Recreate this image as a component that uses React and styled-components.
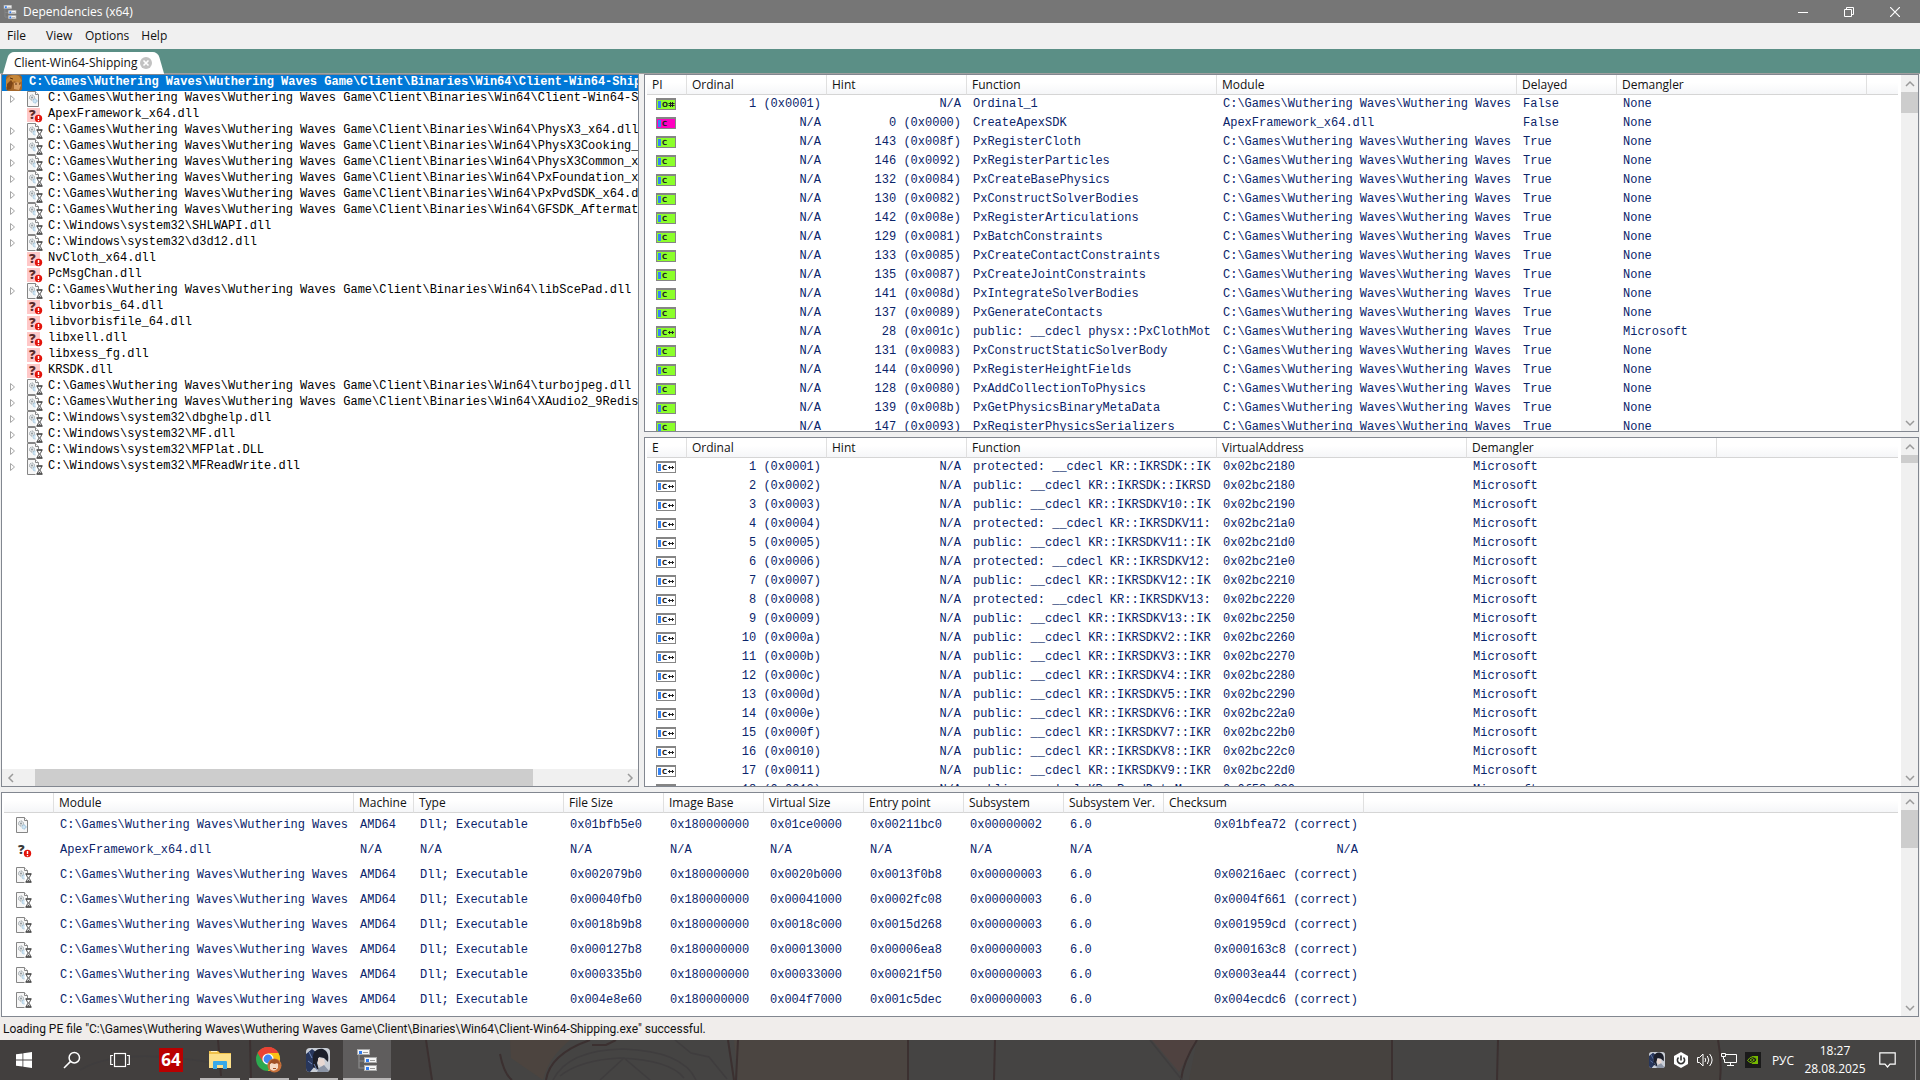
import React from "react";
import styled, { createGlobalStyle, css } from "styled-components";

const GlobalStyle = createGlobalStyle`
  * {
    box-sizing: border-box;
  }
  body {
    margin: 0;
    overflow: hidden;
    font-family: "Open Sans", "Noto Sans", sans-serif;
    font-size: 12px;
    color: #111;
  }
  button {
    border: none;
    padding: 0;
    background: none;
    font: inherit;
    color: inherit;
  }
  svg {
    display: block;
  }
`;

const Page = styled.div`
  display: flex;
  flex-direction: column;
  height: 100vh;
  background-color: #f0f0f0;
`;

/* ---------- title bar, menu, tabs ---------- */

const TitleBar = styled.header`
  display: flex;
  align-items: center;
  height: 23px;
  padding: 0 2px 0 3px;
  background-color: #767676;
  color: #fff;
`;

const Title = styled.h1`
  flex: 1;
  margin: 0;
  padding: 0 0 0 6px;
  font-size: 12px;
  font-weight: 400;
  line-height: 22px;
`;

const WindowButton = styled.button`
  display: flex;
  justify-content: center;
  align-items: center;
  width: 46px;
  height: 21px;
`;

const MenuBar = styled.nav`
  display: flex;
  height: 26px;
  padding-left: 1px;
`;

const MenuItem = styled.button`
  min-width: 39px;
  padding: 0 6px;
  text-align: left;
  line-height: 26px;
`;

const TabStrip = styled.div`
  display: flex;
  align-items: flex-end;
  height: 25px;
  padding-left: 6px;
  background-color: #5b8f86;
  border-bottom: 1px solid #a0a0a0;
`;

const Tab = styled.div`
  position: relative;
  display: flex;
  align-items: center;
  gap: 3px;
  height: 21px;
  padding: 0 8px;
  z-index: 0;
  &::before,
  &::after {
    content: "";
    position: absolute;
    top: 0;
    bottom: -1px;
    width: 60%;
    background-color: #fff;
    z-index: -1;
  }
  &::before {
    left: 0;
    border-radius: 5px 0 0 0;
    transform: skewX(-16deg);
  }
  &::after {
    right: 0;
    border-radius: 0 5px 0 0;
    transform: skewX(16deg);
  }
`;

const TabLabel = styled.button`
  line-height: 22px;
`;

/* ---------- panels ---------- */

const Main = styled.main`
  flex: 1;
  min-height: 0;
  display: grid;
  grid-template-columns: minmax(0, 638fr) minmax(0, 1275fr);
  grid-template-rows: minmax(0, 713fr) minmax(0, 225fr);
  gap: 5px;
  padding: 0 1px;
`;

const RightSide = styled.div`
  display: grid;
  grid-template-rows: minmax(0, 358fr) minmax(0, 350fr);
  gap: 5px;
  min-height: 0;
`;

const Panel = styled.section`
  display: flex;
  flex-direction: ${(props) => props.$direction || "row"};
  grid-column: ${(props) => (props.$wide ? "1 / -1" : "auto")};
  min-width: 0;
  min-height: 0;
  background-color: #fff;
  border: 1px solid #828790;
`;

const TableArea = styled.div`
  flex: 1;
  min-width: 0;
  overflow: hidden;
  padding: 0 3px 0 2px;
`;

const Table = styled.table`
  width: 100%;
  table-layout: fixed;
  border-collapse: separate;
  border-spacing: 0;
`;

const HeadCell = styled.th`
  height: 20px;
  padding: 0 5px;
  border-bottom: 1px solid #d5d5d5;
  border-right: ${(props) => (props.$last ? "none" : "1px solid #e0e0e0")};
  background: linear-gradient(#fff 40%, #f5f6f8);
  font-weight: 400;
  text-align: left;
  line-height: 19px;
  white-space: nowrap;
`;

const Cell = styled.td`
  height: ${(props) => props.$height}px;
  padding: 0 ${(props) => (props.$icon ? 0 : 6)}px 2px ${(props) => props.$icon || 6}px;
  color: #0a246a;
  font-family: "Liberation Mono", monospace;
  line-height: 16px;
  text-align: ${(props) => (props.$right ? "right" : "left")};
  white-space: pre;
  overflow: hidden;
`;

const ScrollBar = styled.div`
  display: flex;
  background-color: #f0f0f0;
  ${(props) =>
    props.$horizontal
      ? css`
          height: 17px;
        `
      : css`
          flex-direction: column;
          width: 17px;
        `}
`;

const ScrollButton = styled.button`
  display: flex;
  flex: 0 0 17px;
  justify-content: center;
  align-items: center;
`;

const ScrollTrack = styled.div`
  flex: 1;
  ${(props) =>
    props.$horizontal
      ? css`
          padding-left: 16px;
        `
      : css`
          min-height: 0;
        `}
`;

const ScrollThumb = styled.div`
  background-color: #cdcdcd;
  width: ${(props) => (props.$horizontal ? props.$size : "100%")};
  height: ${(props) => (props.$horizontal ? "100%" : props.$size)};
`;

/* ---------- tree ---------- */

const TreeList = styled.ul`
  flex: 1;
  min-height: 0;
  margin: 0;
  padding: 0;
  overflow: hidden;
  list-style: none;
  font-family: "Liberation Mono", monospace;
  color: #000;
`;

const TreeItem = styled.li`
  display: flex;
  align-items: center;
  gap: ${(props) => (props.$root ? 7 : 5)}px;
  height: 16px;
  padding-left: ${(props) => (props.$root ? 4 : 7)}px;
  white-space: pre;
  line-height: 14px;
  ${(props) =>
    props.$root &&
    css`
      background-color: #0078d7;
      color: #fff;
      font-weight: 700;
    `}
`;

const TreeText = styled.span`
  height: 16px;
`;

const Expander = styled.span`
  width: 13px;
  flex: none;
`;

const IconBox = styled.span`
  flex: none;
`;

/* ---------- status bar, task bar ---------- */

const StatusBar = styled.footer`
  height: 23px;
  padding-left: 3px;
  background-color: #f0edeb;
  font-family: Roboto, "Open Sans", sans-serif;
  line-height: 25px;
`;

const TaskBar = styled.div`
  position: relative;
  display: flex;
  justify-content: space-between;
  height: 40px;
  background-color: #454443;
  color: #fff;
  z-index: 0;
`;

const Wallpaper = styled.svg`
  position: absolute;
  inset: 0;
  width: 100%;
  height: 100%;
  z-index: -1;
`;

const TaskGroup = styled.div`
  display: flex;
  gap: ${(props) => props.$gap || 0}px;
`;

const TaskButton = styled.button`
  display: flex;
  justify-content: center;
  align-items: center;
  width: 48px;
  height: 40px;
  background-color: ${(props) => (props.$active ? "#5f5d5d" : "transparent")};
  background-image: ${(props) => (props.$running ? "linear-gradient(#b9b7b7, #b9b7b7)" : "none")};
  background-size: ${(props) => (props.$active ? 48 : 40)}px 2px;
  background-position: bottom center;
  background-repeat: no-repeat;
`;

const Tray = styled.div`
  display: flex;
  align-items: center;
`;

const TrayButton = styled.button`
  display: flex;
  justify-content: center;
  align-items: center;
  width: ${(props) => props.$width || 24}px;
  height: 40px;
`;

const Clock = styled.button`
  width: 68px;
  line-height: 18px;
  text-align: center;
`;

const ShowDesktop = styled.button`
  width: 5px;
  height: 40px;
  margin-left: 10px;
  border-left: 1px solid #8a8888;
`;

/* ---------- icons ---------- */

const AppIcon = ({ size = 16 }) => (
  <svg width={size} height={size} viewBox="0 0 22 22">
    <path d="M3 6v13h5M3 12h5" fill="none" stroke="#8b8b8b" strokeWidth="1.2" />
    {[
      [1, 0],
      [8, 8],
      [8, 16],
    ].map(([x, y]) => (
      <g key={y}>
        <rect x={x} y={y} width="13" height="6" fill="#a9a9a9" />
        <rect x={x + 1} y={y + 1} width="11" height="4" fill="#f6f6f6" />
        <rect x={x + 2} y={y + 2} width="3" height="3" fill="#2f7bf0" />
        <rect x={x + 6} y={y + 3} width="5" height="1" fill="#9a9a9a" />
      </g>
    ))}
  </svg>
);

const PageIcon = ({ delayed }) => (
  <svg width="16" height="16" viewBox="0 0 16 16">
    <path d="M.5.5h8l3 3v12H.5z" fill="#f7f7f7" stroke="#858585" />
    <path d="M8.500 .5v3h3" fill="#fff" stroke="#858585" />
    <circle cx="5" cy="6.500" r="2.500" fill="#e4e8ea" stroke="#8f979c" strokeDasharray="1.200 .7" />
    <circle cx="5" cy="6.500" r="1" fill="#8f979c" />
    <circle cx="8" cy="10" r="2" fill="#cfe6f5" stroke="#8fb9d6" strokeDasharray="1.100 .6" />
    {delayed && (
      <g>
        <rect x="8.500" y="6" width="7.500" height="10" fill="#fff" />
        <path d="M9.500 7h6M9.500 15h6" stroke="#333" strokeWidth="1.400" />
        <path d="M10.500 7.500c0 2 1.500 2.500 1.500 3.500s-1.500 1.500-1.500 3.500M14.500 7.500c0 2-1.500 2.500-1.500 3.500s1.500 1.500 1.500 3.500" fill="none" stroke="#333" />
        <path d="M11 14.500l1.500-2 1.500 2z" fill="#555" />
      </g>
    )}
  </svg>
);

const MissingIcon = ({ pink }) => (
  <svg width="16" height="16" viewBox="0 0 16 16">
    {pink && <rect x="0" y="1" width="13" height="14" fill="#ffc8c8" />}
    <text x="2" y="12" fontFamily="Open Sans, sans-serif" fontWeight="800" fontSize="13" fill={pink ? "#5a2b2b" : "#3a3a3a"}>
      ?
    </text>
    <circle cx="11.500" cy="11.500" r="3.700" fill="#e2130b" />
    <path d="M11.500 9v3M11.500 13v1.200" stroke="#fff" strokeWidth="1.400" />
  </svg>
);

const MonsterIcon = () => (
  <svg width="16" height="16" viewBox="0 0 16 16">
    <rect width="16" height="16" rx="3" fill="#a5672a" />
    <path d="M0 5c3-5 9-6 13-4l3 5-3 2-5-2-4 4-4 2z" fill="#c58638" />
    <path d="M1 9l4-4 2 3-2 6-4 1z" fill="#7c4517" />
    <path d="M8 8l4-1 3 3-2 5-5-1z" fill="#d9a066" />
    <path d="M9 9h2M13 9h1M4 3l3 1" stroke="#5a2f0e" />
  </svg>
);

const SymbolIcon = ({ fill = "#8bff2a", label = "C" }) => (
  <svg width="20" height="12" viewBox="0 0 20 12">
    <rect x=".5" y=".5" width="19" height="11" fill={fill} stroke="#858585" />
    <rect width="20" height="2" fill="#858585" />
    <rect x="2" y="3" width="3" height="7" fill="#3584f5" />
    <text x="6" y="9" fontFamily="DejaVu Sans, sans-serif" fontWeight="700" fontSize="7" fill="#222">
      {label[0]}
    </text>
    {label === "C++" && <path d="M12 6.500h6M13.500 5v3M16.500 5v3" stroke="#222" />}
    {label === "O#" && <path d="M12.500 5.500h6M12.500 7.500h6M14.500 4v5M16.500 4v5" stroke="#222" />}
  </svg>
);

const Chevron = ({ dir }) => {
  const paths = {
    up: "M1 7l4-4 4 4",
    down: "M1 3l4 4 4-4",
    left: "M7 1L3 5l4 4",
    right: "M3 1l4 4-4 4",
  };
  return (
    <svg width="10" height="10" viewBox="0 0 10 10">
      <path d={paths[dir]} fill="none" stroke="#9a9a9a" strokeWidth="1.500" />
    </svg>
  );
};

const ExpandIcon = () => (
  <svg width="10" height="10" viewBox="0 0 10 10">
    <path d="M1.500 1.500v7l4-3.500z" fill="#fff" stroke="#a6a6a6" />
  </svg>
);

const GameIcon = ({ size = 24 }) => (
  <svg width={size} height={size} viewBox="0 0 24 24">
    <clipPath id={"game" + size}>
      <rect width="24" height="24" rx="4" />
    </clipPath>
    <g clipPath={`url(#game${size})`}>
      <rect width="24" height="24" fill="#c9ced6" />
      <path d="M0 6L6 1l4 3-3 8 2 6-5 6H0z" fill="#27365c" />
      <path d="M7 9C7 3 12 0 17 1c5 2 6 7 5 13l-4-4-5-1-2 6 2 7-6-3z" fill="#1b1e2a" />
      <path d="M12 10l6 1 1 5-3 3-4-3z" fill="#e8d8d2" />
      <path d="M13 20l5-3 6 7H11z" fill="#8b94a5" />
      <path d="M3 4l3 6M2 13l4 3M8 16l3 6" stroke="#6f86b8" />
    </g>
  </svg>
);

const StartIcon = () => (
  <svg width="16" height="16" viewBox="0 0 16 16" fill="#fff">
    <path d="M0 2.300L6.500 1.400V7.600H0zM7.300 1.300L16 0v7.600H7.300zM0 8.400h6.500v6.200L0 13.700zM7.300 8.400H16V16l-8.700-1.300z" />
  </svg>
);

const SearchIcon = () => (
  <svg width="18" height="18" viewBox="0 0 18 18" fill="none" stroke="#fff" strokeWidth="1.500">
    <circle cx="11.300" cy="6.700" r="5.200" />
    <path d="M7.600 10.400L1 17" />
  </svg>
);

const TaskViewIcon = () => (
  <svg width="20" height="16" viewBox="0 0 20 16" fill="none" stroke="#fff" strokeWidth="1.200">
    <rect x="4.500" y="1.500" width="11" height="13" />
    <path d="M3 3.500H.7v9H3M17 3.500h2.300v9H17" />
  </svg>
);

const SixtyFourIcon = () => (
  <svg width="24" height="24" viewBox="0 0 24 24">
    <rect width="24" height="24" fill="#b90000" />
    <text x="12" y="18" textAnchor="middle" fontFamily="Open Sans, sans-serif" fontWeight="700" fontSize="17" fill="#fff">
      64
    </text>
  </svg>
);

const ExplorerIcon = () => (
  <svg width="22" height="20" viewBox="0 0 22 20">
    <path d="M0 1h9l2 2h11v15H0z" fill="#f0c14b" />
    <path d="M0 4h22v14H0z" fill="#fde08a" />
    <path d="M2 1.500h6" stroke="#fff2c4" />
    <path d="M4 19v-7q0-1 1-1h12q1 0 1 1v7h-4v-4H8v4z" fill="#38a9e8" />
  </svg>
);

const ChromeIcon = () => (
  <svg width="26" height="26" viewBox="0 0 26 26">
    <circle cx="12" cy="12" r="12" fill="#2da94f" />
    <path d="M1.600 6A12 12 0 0 1 22.400 6L12 8z" fill="#ea4335" />
    <path d="M1.600 6L7 15l5-9h10.400A12 12 0 0 0 1.600 6z" fill="#ea4335" />
    <path d="M22.400 6H12l5 9-5 9A12 12 0 0 0 22.400 6z" fill="#fbc116" />
    <circle cx="12" cy="12" r="5.600" fill="#fff" />
    <circle cx="12" cy="12" r="4.400" fill="#4285f4" />
    <circle cx="18.500" cy="18.500" r="7" fill="#c8713a" />
    <path d="M14 17q4-5 8 0v4q-4 5-8 1z" fill="#f6d9c4" />
    <path d="M12.500 18q2-6 6-6t6 6l-3-2-3 1-3-1z" fill="#a04f24" />
    <path d="M17 21.500h3" stroke="#a04f24" />
  </svg>
);

const PowerIcon = () => (
  <svg width="16" height="16" viewBox="0 0 16 16">
    <path d="M8 0l7 4v8l-7 4-7-4V4z" fill="#fff" />
    <path d="M5.500 5.500a3.600 3.600 0 1 0 5 0M8 3.500v5" fill="none" stroke="#333" strokeWidth="1.600" />
  </svg>
);

const VolumeIcon = () => (
  <svg width="17" height="14" viewBox="0 0 17 14" fill="none" stroke="#fff">
    <path d="M.5 4.500h2l3.500-3.500v12l-3.500-3.500h-2z" />
    <path d="M8 5q1.500 2 0 4M10.300 3q3 4 0 8M12.600 1q5 6 0 12" />
  </svg>
);

const NetworkIcon = () => (
  <svg width="16" height="14" viewBox="0 0 16 14" fill="none" stroke="#fff">
    <path d="M5 1.500h10.500v8H3.500V6M9.500 9.500v3M6 12.500h7" />
    <path d="M.5.500h4v3h-4zM2.500 3.500v3" />
  </svg>
);

const NvidiaIcon = () => (
  <svg width="16" height="16" viewBox="0 0 16 16">
    <rect width="16" height="16" fill="#1a1a1a" />
    <path d="M7 4h6v8H7z" fill="#76b900" />
    <path d="M2.500 8.500Q5 4.500 8 4.700T12 8q-2 3-4.500 3T2.500 8.500z" fill="#1a1a1a" stroke="#76b900" />
    <path d="M5 8q2.500-3 4.500 0-2.500 3-4.500 0z" fill="none" stroke="#76b900" />
  </svg>
);

const NotifyIcon = () => (
  <svg width="17" height="16" viewBox="0 0 17 16" fill="none" stroke="#fff" strokeWidth="1.200">
    <path d="M.8.800h15.400v11.400H11L8.500 15 6 12.200H.8z" />
  </svg>
);

/* ---------- data ---------- */

const WW = "C:\\Games\\Wuthering Waves\\Wuthering Waves";
const BIN = WW + " Game\\Client\\Binaries\\Win64\\";
const SYS = "C:\\Windows\\system32\\";

const treeRows = [
  ["page", BIN + "Client-Win64-Shipping.exe"],
  ["missing", "ApexFramework_x64.dll"],
  ["delayed", BIN + "PhysX3_x64.dll"],
  ["delayed", BIN + "PhysX3Cooking_x64.dll"],
  ["delayed", BIN + "PhysX3Common_x64.dll"],
  ["delayed", BIN + "PxFoundation_x64.dll"],
  ["delayed", BIN + "PxPvdSDK_x64.dll"],
  ["delayed", BIN + "GFSDK_Aftermath_Lib.x64.dll"],
  ["delayed", SYS + "SHLWAPI.dll"],
  ["delayed", SYS + "d3d12.dll"],
  ["missing", "NvCloth_x64.dll"],
  ["missing", "PcMsgChan.dll"],
  ["delayed", BIN + "libScePad.dll"],
  ["missing", "libvorbis_64.dll"],
  ["missing", "libvorbisfile_64.dll"],
  ["missing", "libxell.dll"],
  ["missing", "libxess_fg.dll"],
  ["missing", "KRSDK.dll"],
  ["delayed", BIN + "turbojpeg.dll"],
  ["delayed", BIN + "XAudio2_9Redist.dll"],
  ["delayed", SYS + "dbghelp.dll"],
  ["delayed", SYS + "MF.dll"],
  ["delayed", SYS + "MFPlat.DLL"],
  ["delayed", SYS + "MFReadWrite.dll"],
];

const importColumns = [
  { label: "PI", width: 40, icon: 9 },
  { label: "Ordinal", width: 140, right: true },
  { label: "Hint", width: 140, right: true },
  { label: "Function", width: 250 },
  { label: "Module", width: 300 },
  { label: "Delayed", width: 100 },
  { label: "Demangler", width: 250 },
];

const delayedImports = [
  ["143 (0x008f)", "PxRegisterCloth"],
  ["146 (0x0092)", "PxRegisterParticles"],
  ["132 (0x0084)", "PxCreateBasePhysics"],
  ["130 (0x0082)", "PxConstructSolverBodies"],
  ["142 (0x008e)", "PxRegisterArticulations"],
  ["129 (0x0081)", "PxBatchConstraints"],
  ["133 (0x0085)", "PxCreateContactConstraints"],
  ["135 (0x0087)", "PxCreateJointConstraints"],
  ["141 (0x008d)", "PxIntegrateSolverBodies"],
  ["137 (0x0089)", "PxGenerateContacts"],
  ["28 (0x001c)", "public: __cdecl physx::PxClothMot", "Microsoft"],
  ["131 (0x0083)", "PxConstructStaticSolverBody"],
  ["144 (0x0090)", "PxRegisterHeightFields"],
  ["128 (0x0080)", "PxAddCollectionToPhysics"],
  ["139 (0x008b)", "PxGetPhysicsBinaryMetaData"],
  ["147 (0x0093)", "PxRegisterPhysicsSerializers"],
];

const importRows = [
  [<SymbolIcon label="O#" />, "1 (0x0001)", "N/A", "Ordinal_1", WW, "False", "None"],
  [<SymbolIcon fill="#ff00c0" />, "N/A", "0 (0x0000)", "CreateApexSDK", "ApexFramework_x64.dll", "False", "None"],
  ...delayedImports.map(([hint, name, demangler]) => [
    <SymbolIcon label={demangler ? "C++" : "C"} />,
    "N/A",
    hint,
    name,
    WW,
    "True",
    demangler || "None",
  ]),
];

const exportColumns = [
  { label: "E", width: 40, icon: 9 },
  { label: "Ordinal", width: 140, right: true },
  { label: "Hint", width: 140, right: true },
  { label: "Function", width: 250 },
  { label: "VirtualAddress", width: 250 },
  { label: "Demangler", width: 250 },
];

const exportRows = [
  ["protected: __cdecl KR::IKRSDK::IK", "0x02bc2180"],
  ["public: __cdecl KR::IKRSDK::IKRSD", "0x02bc2180"],
  ["public: __cdecl KR::IKRSDKV10::IK", "0x02bc2190"],
  ["protected: __cdecl KR::IKRSDKV11:", "0x02bc21a0"],
  ["public: __cdecl KR::IKRSDKV11::IK", "0x02bc21d0"],
  ["protected: __cdecl KR::IKRSDKV12:", "0x02bc21e0"],
  ["public: __cdecl KR::IKRSDKV12::IK", "0x02bc2210"],
  ["protected: __cdecl KR::IKRSDKV13:", "0x02bc2220"],
  ["public: __cdecl KR::IKRSDKV13::IK", "0x02bc2250"],
  ["public: __cdecl KR::IKRSDKV2::IKR", "0x02bc2260"],
  ["public: __cdecl KR::IKRSDKV3::IKR", "0x02bc2270"],
  ["public: __cdecl KR::IKRSDKV4::IKR", "0x02bc2280"],
  ["public: __cdecl KR::IKRSDKV5::IKR", "0x02bc2290"],
  ["public: __cdecl KR::IKRSDKV6::IKR", "0x02bc22a0"],
  ["public: __cdecl KR::IKRSDKV7::IKR", "0x02bc22b0"],
  ["public: __cdecl KR::IKRSDKV8::IKR", "0x02bc22c0"],
  ["public: __cdecl KR::IKRSDKV9::IKR", "0x02bc22d0"],
  ["public: __cdecl KR::ReadDataMan::", "0x0f58a220"],
].map(([name, address], i) => [
  <SymbolIcon fill="#fff" label="C++" />,
  `${i + 1} (0x${(i + 1).toString(16).padStart(4, "0")})`,
  "N/A",
  name,
  address,
  "Microsoft",
]);

const moduleColumns = [
  { label: "", width: 50, icon: 12 },
  { label: "Module", width: 300 },
  { label: "Machine", width: 60 },
  { label: "Type", width: 150 },
  { label: "File Size", width: 100 },
  { label: "Image Base", width: 100 },
  { label: "Virtual Size", width: 100 },
  { label: "Entry point", width: 100 },
  { label: "Subsystem", width: 100 },
  { label: "Subsystem Ver.", width: 100 },
  { label: "Checksum", width: 200, right: true },
];

const moduleRow = (icon, size, virtualSize, entry, subsystem, checksum) => [
  icon,
  WW,
  "AMD64",
  "Dll; Executable",
  size,
  "0x180000000",
  virtualSize,
  entry,
  subsystem,
  "6.0",
  checksum + " (correct)",
];

const moduleRows = [
  moduleRow(<PageIcon />, "0x01bfb5e0", "0x01ce0000", "0x00211bc0", "0x00000002", "0x01bfea72"),
  [<MissingIcon />, "ApexFramework_x64.dll", ...Array(9).fill("N/A")],
  moduleRow(<PageIcon delayed />, "0x002079b0", "0x0020b000", "0x0013f0b8", "0x00000003", "0x00216aec"),
  moduleRow(<PageIcon delayed />, "0x00040fb0", "0x00041000", "0x0002fc08", "0x00000003", "0x0004f661"),
  moduleRow(<PageIcon delayed />, "0x0018b9b8", "0x0018c000", "0x0015d268", "0x00000003", "0x001959cd"),
  moduleRow(<PageIcon delayed />, "0x000127b8", "0x00013000", "0x00006ea8", "0x00000003", "0x000163c8"),
  moduleRow(<PageIcon delayed />, "0x000335b0", "0x00033000", "0x00021f50", "0x00000003", "0x0003ea44"),
  moduleRow(<PageIcon delayed />, "0x004e8e60", "0x004f7000", "0x001c5dec", "0x00000003", "0x004ecdc6"),
];

/* ---------- components ---------- */

const Scroller = ({ horizontal, size }) => (
  <ScrollBar $horizontal={horizontal}>
    <ScrollButton aria-label={horizontal ? "Scroll left" : "Scroll up"}>
      <Chevron dir={horizontal ? "left" : "up"} />
    </ScrollButton>
    <ScrollTrack $horizontal={horizontal}>
      <ScrollThumb $horizontal={horizontal} $size={size} />
    </ScrollTrack>
    <ScrollButton aria-label={horizontal ? "Scroll right" : "Scroll down"}>
      <Chevron dir={horizontal ? "right" : "down"} />
    </ScrollButton>
  </ScrollBar>
);

const DataTable = ({ name, columns, rows, rowHeight, thumb, wide }) => (
  <Panel $wide={wide} aria-label={name}>
    <TableArea>
      <Table>
        <colgroup>
          {columns.map((col) => (
            <col key={col.label} width={col.width} />
          ))}
          <col />
        </colgroup>
        <thead>
          <tr>
            {columns.map((col) => (
              <HeadCell key={col.label}>{col.label}</HeadCell>
            ))}
            <HeadCell $last />
          </tr>
        </thead>
        <tbody>
          {rows.map((row, i) => (
            <tr key={i}>
              {row.map((value, j) => (
                <Cell key={j} $height={rowHeight} $icon={columns[j].icon} $right={columns[j].right}>
                  {value}
                </Cell>
              ))}
            </tr>
          ))}
        </tbody>
      </Table>
    </TableArea>
    <Scroller size={thumb} />
  </Panel>
);

const Tree = () => (
  <Panel $direction="column" aria-label="Dependency tree">
    <TreeList>
      <TreeItem $root>
        <IconBox>
          <MonsterIcon />
        </IconBox>
        <TreeText>{BIN + "Client-Win64-Shipping.exe"}</TreeText>
      </TreeItem>
      {treeRows.map(([kind, path], i) => (
        <TreeItem key={i}>
          <Expander>{kind !== "missing" && <ExpandIcon />}</Expander>
          <IconBox>{kind === "missing" ? <MissingIcon pink /> : <PageIcon delayed={kind === "delayed"} />}</IconBox>
          <TreeText>{path}</TreeText>
        </TreeItem>
      ))}
    </TreeList>
    <Scroller horizontal size="85%" />
  </Panel>
);

const App = () => {
  return (
    <>
      <GlobalStyle />
      <Page>
        <TitleBar>
          <AppIcon size={14} />
          <Title>Dependencies (x64)</Title>
          <WindowButton aria-label="Minimize">
            <svg width="10" height="10" viewBox="0 0 10 10">
              <path d="M0 5.500h10" stroke="#fff" />
            </svg>
          </WindowButton>
          <WindowButton aria-label="Restore">
            <svg width="10" height="10" viewBox="0 0 10 10" fill="none" stroke="#fff">
              <path d="M.5 2.500h7v7h-7zM2.500 2.500v-2h7v7h-2" />
            </svg>
          </WindowButton>
          <WindowButton aria-label="Close">
            <svg width="10" height="10" viewBox="0 0 10 10">
              <path d="M0 0l10 10M10 0L0 10" stroke="#fff" strokeWidth="1.200" />
            </svg>
          </WindowButton>
        </TitleBar>
        <MenuBar>
          <MenuItem>File</MenuItem>
          <MenuItem>View</MenuItem>
          <MenuItem>Options</MenuItem>
          <MenuItem>Help</MenuItem>
        </MenuBar>
        <TabStrip>
          <Tab>
            <TabLabel>Client-Win64-Shipping</TabLabel>
            <button aria-label="Close tab">
              <svg width="12" height="12" viewBox="0 0 12 12">
                <circle cx="6" cy="6" r="6" fill="#c2c2c2" />
                <path d="M3.500 3.500l5 5M8.500 3.500l-5 5" stroke="#fff" strokeWidth="1.600" />
              </svg>
            </button>
          </Tab>
        </TabStrip>
        <Main>
          <Tree />
          <RightSide>
            <DataTable name="Imports" columns={importColumns} rows={importRows} rowHeight={19} thumb="21px" />
            <DataTable name="Exports" columns={exportColumns} rows={exportRows} rowHeight={19} thumb="8px" />
          </RightSide>
          <DataTable name="Modules" columns={moduleColumns} rows={moduleRows} rowHeight={25} thumb="38px" wide />
        </Main>
        <StatusBar>
          Loading PE file "{BIN}Client-Win64-Shipping.exe" successful.
        </StatusBar>
        <TaskBar>
          <Wallpaper viewBox="0 0 1920 40" preserveAspectRatio="none" fill="none">
            <path d="M0 0h425l6 40H0z" fill="#423f3e" />
            <path d="M510 0h60q-22 18-27 40l-32-22z" fill="#4c443f" />
            <path d="M734 0h174v40H738z" fill="#4b4541" />
            <path d="M1152 0h45l-18 32z" fill="#4f4240" />
            <path d="M1197 0h195v40h-203zM1500 0h220v40h-222z" fill="#46423f" />
            <g stroke="#3b3030" strokeWidth="2">
              <path d="M426 0l6 40M590 0q-40 14-44 40M592 5h14l10-5M728 0l6 40M738 0l-2 40M908 0v40M995 0l-1 40M1197 0q-14 22-16 40M1392 0v40M1498 0l-1 40M1718 0q4 20 2 40" />
              <path d="M500 14q4 20 12 26M218 0l3 36M250 0l1 40" />
            </g>
            <g stroke="#3f3d3e" strokeWidth="1.500">
              <path d="M553 40q15-30 70-31 60 2 73 31M600 40l24-22 26 22M560 36q20-16 60-18 50 2 64 20M80 30q40-24 140-6M675 0l16 13 18 4 18 22M1150 0l32 40" />
            </g>
          </Wallpaper>
          <TaskGroup $gap={3}>
            <TaskGroup>
              <TaskButton aria-label="Start">
                <StartIcon />
              </TaskButton>
              <TaskButton aria-label="Search">
                <SearchIcon />
              </TaskButton>
              <TaskButton aria-label="Task view">
                <TaskViewIcon />
              </TaskButton>
            </TaskGroup>
            <TaskGroup $gap={1}>
              <TaskButton aria-label="AIDA64">
                <SixtyFourIcon />
              </TaskButton>
              <TaskButton $running aria-label="File Explorer">
                <ExplorerIcon />
              </TaskButton>
              <TaskButton $running aria-label="Chrome">
                <ChromeIcon />
              </TaskButton>
              <TaskButton $running aria-label="Wuthering Waves">
                <GameIcon />
              </TaskButton>
              <TaskButton $running $active aria-label="Dependencies">
                <AppIcon size={22} />
              </TaskButton>
            </TaskGroup>
          </TaskGroup>
          <Tray>
            <TrayButton aria-label="Game launcher">
              <GameIcon size={16} />
            </TrayButton>
            <TrayButton aria-label="Power">
              <PowerIcon />
            </TrayButton>
            <TrayButton aria-label="Volume">
              <VolumeIcon />
            </TrayButton>
            <TrayButton aria-label="Network">
              <NetworkIcon />
            </TrayButton>
            <TrayButton aria-label="Nvidia settings">
              <NvidiaIcon />
            </TrayButton>
            <TrayButton $width={36}>РУС</TrayButton>
            <Clock>
              18:27
              <br />
              28.08.2025
            </Clock>
            <TrayButton $width={36} aria-label="Notifications">
              <NotifyIcon />
            </TrayButton>
            <ShowDesktop aria-label="Show desktop" />
          </Tray>
        </TaskBar>
      </Page>
    </>
  );
};

export default App;
